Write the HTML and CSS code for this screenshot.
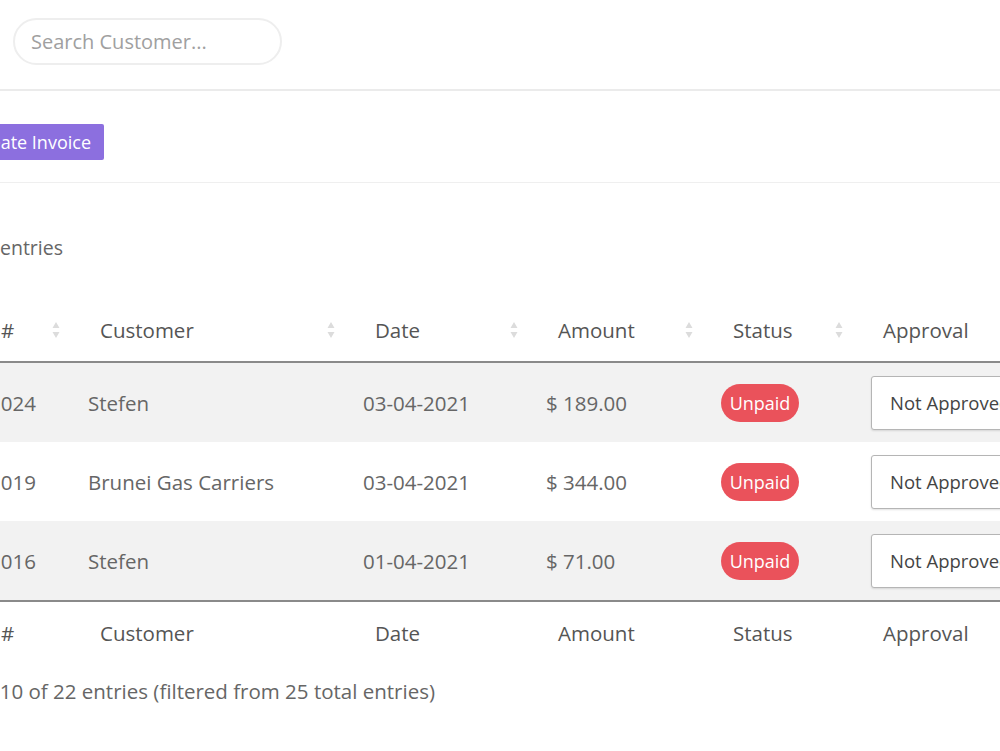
FILE: index.html
```html
<!DOCTYPE html>
<html>

<head>
    <title>Invoices</title>
    <link rel="stylesheet" href="styles.css">
</head>

<body>
    <div class="topbar">
        <input type="text" class="search" placeholder="Search Customer...">
    </div>

    <div class="toolbar">
        <div class="toolbar-inner">
            <button class="btn-create">Create Invoice</button>
        </div>
    </div>

    <div class="length">Show 10 entries</div>

    <table class="invoices">
        <colgroup>
            <col class="c-id">
            <col class="c-customer">
            <col class="c-date">
            <col class="c-amount">
            <col class="c-status">
            <col class="c-approval">
        </colgroup>
        <thead>
            <tr>
                <th><div class="th-in"><span>#</span><svg class="sort" viewBox="0 0 8 18"><path d="M4 1 L7.5 7 H0.5 Z M4 17 L7.5 11 H0.5 Z"/></svg></div></th>
                <th><div class="th-in"><span>Customer</span><svg class="sort" viewBox="0 0 8 18"><path d="M4 1 L7.5 7 H0.5 Z M4 17 L7.5 11 H0.5 Z"/></svg></div></th>
                <th><div class="th-in"><span>Date</span><svg class="sort" viewBox="0 0 8 18"><path d="M4 1 L7.5 7 H0.5 Z M4 17 L7.5 11 H0.5 Z"/></svg></div></th>
                <th><div class="th-in"><span>Amount</span><svg class="sort" viewBox="0 0 8 18"><path d="M4 1 L7.5 7 H0.5 Z M4 17 L7.5 11 H0.5 Z"/></svg></div></th>
                <th><div class="th-in"><span>Status</span><svg class="sort" viewBox="0 0 8 18"><path d="M4 1 L7.5 7 H0.5 Z M4 17 L7.5 11 H0.5 Z"/></svg></div></th>
                <th><div class="th-in"><span>Approval</span></div></th>
            </tr>
        </thead>
        <tbody>
            <tr class="odd">
                <td>1024</td>
                <td>Stefen</td>
                <td>03-04-2021</td>
                <td>$ 189.00</td>
                <td><span class="badge">Unpaid</span></td>
                <td><div class="approve">Not Approved</div></td>
            </tr>
            <tr>
                <td>1019</td>
                <td>Brunei Gas Carriers</td>
                <td>03-04-2021</td>
                <td>$ 344.00</td>
                <td><span class="badge">Unpaid</span></td>
                <td><div class="approve">Not Approved</div></td>
            </tr>
            <tr class="odd">
                <td>1016</td>
                <td>Stefen</td>
                <td>01-04-2021</td>
                <td>$ 71.00</td>
                <td><span class="badge">Unpaid</span></td>
                <td><div class="approve">Not Approved</div></td>
            </tr>
        </tbody>
        <tfoot>
            <tr>
                <th><div class="th-in"><span>#</span></div></th>
                <th><div class="th-in"><span>Customer</span></div></th>
                <th><div class="th-in"><span>Date</span></div></th>
                <th><div class="th-in"><span>Amount</span></div></th>
                <th><div class="th-in"><span>Status</span></div></th>
                <th><div class="th-in"><span>Approval</span></div></th>
            </tr>
        </tfoot>
    </table>

    <div class="info">Showing 1 to 10 of 22 entries (filtered from 25 total entries)</div>
</body>

</html>
```

FILE: styles.css
```css
body {
    font-family: "Open Sans", Arial, sans-serif;
    margin: 0;
    padding: 0;
    color: #666;
    background: #fff;
    overflow: hidden;
}

.topbar {
    padding: 18px 0 24px 13px;
    border-bottom: 2px solid #ebebeb;
}

.search {
    width: 269px;
    height: 47px;
    box-sizing: border-box;
    border: 2px solid #eeeeee;
    border-radius: 24px;
    padding: 0 16px;
    font-family: inherit;
    font-size: 20px;
    color: #555;
    outline: none;
}

.search::placeholder {
    color: #a0a0a0;
}

.toolbar {
    padding: 33px 0 22px;
    border-bottom: 1px solid #efefef;
}

.toolbar-inner {
    width: 104px;
    margin-left: -100px;
    display: flex;
    justify-content: flex-end;
    padding-left: 100px;
}

.btn-create {
    height: 36px;
    padding: 0 13px;
    border: none;
    border-radius: 2px;
    background-color: #8c6fdf;
    color: #fff;
    font-family: inherit;
    font-size: 18px;
    font-weight: 500;
    white-space: nowrap;
    flex-shrink: 0;
}

.length {
    width: 300px;
    margin-left: -237px;
    margin-top: 53px;
    text-align: right;
    font-size: 19.5px;
    line-height: 24px;
    color: #666;
}

.invoices {
    margin-top: 39px;
    margin-left: -29px;
    width: 1102px;
    table-layout: fixed;
    border-collapse: collapse;
}

.c-id { width: 99px; }
.c-customer { width: 275px; }
.c-date { width: 183px; }
.c-amount { width: 175px; }
.c-status { width: 150px; }
.c-approval { width: 220px; }

.invoices th {
    height: 62px;
    padding: 0 10px 0 30px;
    text-align: left;
    font-size: 20.5px;
    font-weight: 500;
    color: #555;
}

.invoices thead th {
    border-bottom: 2px solid #8a8a8a;
}

.invoices tfoot th {
    border-top: 2px solid #8a8a8a;
}

.th-in {
    display: flex;
    align-items: center;
    justify-content: space-between;
}

.sort {
    width: 8px;
    height: 18px;
    fill: #dcdcdc;
    flex-shrink: 0;
}

.invoices td {
    height: 79px;
    padding: 0 10px 0 18px;
    font-size: 20.5px;
    color: #666;
    white-space: nowrap;
    overflow: hidden;
}

.invoices tr.odd td {
    background-color: #f2f2f2;
}

.badge {
    display: inline-block;
    width: 78px;
    height: 38px;
    line-height: 38px;
    border-radius: 19px;
    background-color: #ea525b;
    color: #fff;
    text-align: center;
    font-size: 18px;
    font-weight: 500;
}

.approve {
    width: 190px;
    height: 54px;
    box-sizing: border-box;
    line-height: 52px;
    padding-left: 18px;
    border: 1px solid #b5b5b5;
    border-radius: 3px;
    background: #fff;
    box-shadow: 0 1px 2px rgba(0, 0, 0, 0.12);
    font-size: 18.5px;
    color: #444;
}

.info {
    width: 700px;
    margin-left: -265px;
    margin-top: 15px;
    text-align: right;
    font-size: 20.5px;
    line-height: 24px;
    color: #666;
}
```
